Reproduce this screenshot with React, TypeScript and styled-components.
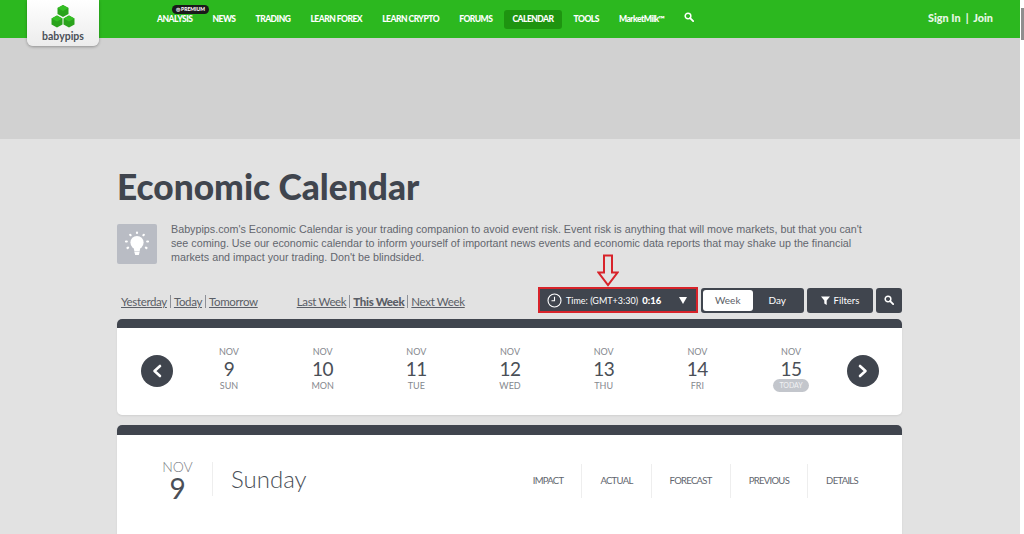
import React from "react";
import styled, { createGlobalStyle } from "styled-components";

const GlobalStyle = createGlobalStyle`
  html, body {
    margin: 0;
    padding: 0;
    background: #e2e2e2;
    overflow: hidden;
  }
  * {
    box-sizing: border-box;
  }
`;

const navItems = [
  "ANALYSIS",
  "NEWS",
  "TRADING",
  "LEARN FOREX",
  "LEARN CRYPTO",
  "FORUMS",
  "CALENDAR",
  "TOOLS",
  "MarketMilk™",
];

const days = [
  { date: "9", name: "SUN" },
  { date: "10", name: "MON" },
  { date: "11", name: "TUE" },
  { date: "12", name: "WED" },
  { date: "13", name: "THU" },
  { date: "14", name: "FRI" },
  { date: "15", name: "TODAY", today: true },
];

const columns = ["IMPACT", "ACTUAL", "FORECAST", "PREVIOUS", "DETAILS"];

const SearchIcon = ({ size = 10 }: { size?: number }) => (
  <svg width={size} height={size} viewBox="0 0 12 12" fill="none" stroke="currentColor" strokeWidth="1.8">
    <circle cx="4.8" cy="4.8" r="3.4" />
    <path d="M7.4 7.4 11 11" strokeLinecap="round" strokeWidth="2.2" />
  </svg>
);

const Logo = () => (
  <svg width="24" height="24" viewBox="0 0 24 24">
    <path d="M12 1 17.5 4v6L12 13 6.500 10V4z" fill="#2aa31c" />
    <path d="M6 11.500 11.500 14.500v6L6 23.500.5 20.500v-6z" fill="#2aa31c" />
    <path d="M18 11.500 23.500 14.500v6L18 23.500l-5.500-3v-6z" fill="#2aa31c" />
    <path d="M12 1 17.500 4 12 7 6.500 4z" fill="#35bf25" />
    <path d="M6 11.500 11.500 14.500 6 17.500.5 14.500z" fill="#35bf25" />
    <path d="M18 11.500 23.500 14.500 18 17.500l-5.500-3z" fill="#35bf25" />
  </svg>
);

const BulbIcon = () => (
  <svg width="26" height="26" viewBox="0 0 26 26" fill="#fff">
    <circle cx="13" cy="11.500" r="6.600" />
    <path d="M9.500 16h7l-.8 4h-5.400z" />
    <path d="M10.200 20.500h5.600l-1 3.500h-3.600z" />
    <g stroke="#fff" strokeWidth="2.200" strokeLinecap="round">
      <path d="M13 1.500v.4M6.200 3.800l.4.4M19.800 3.800l-.4.4M2 10.500h.8M23.200 10.500h.8M3.500 17l.6-.4M22.500 17l-.6-.4" />
    </g>
  </svg>
);

const ClockIcon = () => (
  <svg width="15" height="15" viewBox="0 0 15 15" fill="none" stroke="#fff" strokeWidth="1.100">
    <circle cx="7.500" cy="7.500" r="6.500" />
    <path d="M7.500 3.800v3.900H4.500" />
  </svg>
);

const FunnelIcon = () => (
  <svg width="9" height="9" viewBox="0 0 9 9" fill="#fff">
    <path d="M0 .5h9L5.700 4.500V9L3.300 7.500v-3z" />
  </svg>
);

const Chevron = ({ right }: { right?: boolean }) => (
  <svg width="10" height="14" viewBox="0 0 10 14" fill="none" stroke="#fff" strokeWidth="2.600" strokeLinecap="round" strokeLinejoin="round">
    <path d={right ? "M2 2l5.500 5L2 12" : "M8 2 2.500 7 8 12"} />
  </svg>
);

const App = () => {
  return (
    <>
      <GlobalStyle />
      <Frame>
        <Page>
          <TopBar>
            <LogoCard>
              <Logo />
              <LogoText>babypips</LogoText>
            </LogoCard>
            <Nav>
              {navItems.map((item) => (
                <NavItem key={item} $active={item === "CALENDAR"}>
                  {item === "ANALYSIS" && <PremiumBadge>◎ PREMIUM</PremiumBadge>}
                  {item}
                </NavItem>
              ))}
              <NavSearch>
                <SearchIcon />
              </NavSearch>
            </Nav>
            <Account>Sign In &nbsp;|&nbsp; Join</Account>
          </TopBar>
          <AdBand />
          <Main>
            <Title>Economic Calendar</Title>
            <Intro>
              <BulbBox>
                <BulbIcon />
              </BulbBox>
              <IntroText>
                Babypips.com's Economic Calendar is your trading companion to avoid event risk. Event risk is anything
                that will move markets, but that you can't see coming. Use our economic calendar to inform yourself of
                important news events and economic data reports that may shake up the financial markets and impact your
                trading. Don't be blindsided.
              </IntroText>
            </Intro>
            <Toolbar>
              <LinkGroup>
                <DateLink>Yesterday</DateLink>
                <DateLink>Today</DateLink>
                <DateLink>Tomorrow</DateLink>
              </LinkGroup>
              <WeekLinks>
                <DateLink>Last Week</DateLink>
                <DateLink $bold>This Week</DateLink>
                <DateLink>Next Week</DateLink>
              </WeekLinks>
              <Controls>
                <TimeWrap>
                  <TimeButton>
                    <ClockIcon />
                    <TimeLabel>Time: (GMT+3:30)</TimeLabel>
                    <TimeValue>0:16</TimeValue>
                    <Caret />
                  </TimeButton>
                  <ArrowMark>
                    <svg width="22" height="33" viewBox="0 0 22 33" fill="none" stroke="#d8232a" strokeWidth="2">
                      <path d="M7 1.500h8v17h5.500L11 31 1.500 18.500H7z" />
                    </svg>
                  </ArrowMark>
                </TimeWrap>
                <ViewSwitch>
                  <ViewOption $selected>Week</ViewOption>
                  <ViewOption>Day</ViewOption>
                </ViewSwitch>
                <DarkButton $width={66}>
                  <FunnelIcon />
                  Filters
                </DarkButton>
                <DarkButton $width={26}>
                  <SearchIcon />
                </DarkButton>
              </Controls>
            </Toolbar>
            <Card>
              <CardTop $height={9} />
              <WeekRow>
                <RoundButton>
                  <Chevron />
                </RoundButton>
                <Days>
                  {days.map((day) => (
                    <Day key={day.date}>
                      <DayMonth>NOV</DayMonth>
                      <DayNumber>{day.date}</DayNumber>
                      {day.today ? <TodayPill>{day.name}</TodayPill> : <DayName>{day.name}</DayName>}
                    </Day>
                  ))}
                </Days>
                <RoundButton>
                  <Chevron right />
                </RoundButton>
              </WeekRow>
            </Card>
            <DayCard>
              <CardTop $height={10} />
              <DayHeader>
                <DateBlock>
                  <DateMonth>NOV</DateMonth>
                  <DateNumber>9</DateNumber>
                </DateBlock>
                <DayTitle>Sunday</DayTitle>
                <Columns>
                  {columns.map((column) => (
                    <Column key={column}>{column}</Column>
                  ))}
                </Columns>
              </DayHeader>
            </DayCard>
          </Main>
        </Page>
        <ScrollTrack>
          <ScrollThumb />
        </ScrollTrack>
      </Frame>
    </>
  );
};

const Frame = styled.div`
  width: 1024px;
  height: 534px;
  overflow: hidden;
  display: flex;
`;

const Page = styled.div`
  width: 1020px;
  height: 534px;
  overflow: hidden;
  background: #e2e2e2;
  font-family: "Lato", "Liberation Sans", sans-serif;
  color: #40454e;
`;

const ScrollTrack = styled.div`
  width: 4px;
  background: #fff;
  padding: 8px 0 0 1px;
`;

const ScrollThumb = styled.div`
  height: 32px;
  background: #8e8e8e;
`;

const TopBar = styled.header`
  position: relative;
  height: 38px;
  background: #2cb81f;
  display: flex;
  align-items: center;
  padding: 0 27px 0 27px;
`;

const LogoCard = styled.div`
  width: 72px;
  height: 46px;
  align-self: flex-start;
  background: linear-gradient(#ffffff, #ececec);
  border-radius: 0 0 6px 6px;
  box-shadow: 0 1px 3px rgba(0, 0, 0, 0.3);
  display: flex;
  flex-direction: column;
  align-items: center;
  padding-top: 4px;
  position: relative;
  z-index: 1;
`;

const LogoText = styled.div`
  font-size: 10.500px;
  font-weight: 700;
  line-height: 13px;
  margin-top: 2px;
  color: #4a4f57;
`;

const Nav = styled.nav`
  display: flex;
  align-items: center;
  margin-left: 58px;
  gap: 20px;
`;

const NavItem = styled.div<{ $active?: boolean }>`
  position: relative;
  font-size: 8.5px;
  font-weight: 900;
  letter-spacing: -0.5px;
  color: #fff;
  white-space: nowrap;
  height: 19px;
  line-height: 19px;
  padding: 0 8px;
  margin: 0 -8px;
  border-radius: 3px;
  background: ${(p) => (p.$active ? "#1e9410" : "transparent")};
`;

const PremiumBadge = styled.span`
  position: absolute;
  left: 23px;
  top: -5px;
  width: 37px;
  height: 9px;
  line-height: 9px;
  text-align: center;
  border-radius: 5px;
  background: #1a1a1a;
  color: #fff;
  font-size: 5px;
  font-weight: 900;
  letter-spacing: 0;
`;

const NavSearch = styled.div`
  color: #fff;
  display: flex;
  margin-top: -4px;
  margin-left: -1px;
`;

const Account = styled.div`
  margin-left: auto;
  margin-bottom: 3px;
  font-size: 10.800px;
  font-weight: 900;
  color: #e8f7e6;
`;

const AdBand = styled.div`
  height: 101px;
  background: #d1d1d1;
`;

const Main = styled.main`
  width: 785px;
  margin-left: 117px;
`;

const Title = styled.h1`
  margin: 30px 0 0;
  font-size: 35.300px;
  line-height: 36px;
  font-weight: 900;
  color: #40454e;
`;

const Intro = styled.div`
  display: flex;
  gap: 14px;
  margin-top: 19px;
`;

const BulbBox = styled.div`
  width: 40px;
  height: 40px;
  flex: none;
  border-radius: 2px;
  background: #b9bcc4;
  display: flex;
  align-items: center;
  justify-content: center;
`;

const IntroText = styled.p`
  margin: -2px 0 0;
  width: 700px;
  font-family: "Liberation Sans", Arial, sans-serif;
  font-size: 10.740px;
  line-height: 14px;
  color: #62666e;
`;

const Toolbar = styled.div`
  display: flex;
  align-items: center;
  margin-top: 23px;
  height: 26px;
  padding-left: 4px;
`;

const LinkGroup = styled.div`
  display: flex;
  align-items: center;
  padding-top: 2px;
`;

const WeekLinks = styled(LinkGroup)`
  margin-left: 36px;
`;

const DateLink = styled.a<{ $bold?: boolean }>`
  font-size: 11.500px;
  letter-spacing: -0.35px;
  line-height: 13px;
  color: #5a5e66;
  font-weight: ${(p) => (p.$bold ? 900 : 400)};
  text-decoration: underline;
  padding: 0 3px;
  border-left: 1px solid #8d9097;

  &:first-child {
    border-left: 0;
    padding-left: 0;
  }
`;

const Controls = styled.div`
  margin-left: auto;
  display: flex;
  align-items: center;
  gap: 3px;
`;

const TimeWrap = styled.div`
  position: relative;
`;

const TimeButton = styled.div`
  width: 160px;
  height: 26px;
  background: #40454e;
  border: 2px solid #d8232a;
  color: #fff;
  display: flex;
  align-items: center;
  padding: 0 9px 0 7px;
  font-size: 9px;
`;

const TimeLabel = styled.span`
  margin-left: 4px;
`;

const TimeValue = styled.span`
  margin-left: 4px;
  font-weight: 900;
  font-size: 9.500px;
`;

const Caret = styled.span`
  margin-left: auto;
  width: 0;
  height: 0;
  border-left: 4.500px solid transparent;
  border-right: 4.500px solid transparent;
  border-top: 7px solid #fff;
`;

const ArrowMark = styled.div`
  position: absolute;
  left: 59px;
  top: -33px;
  line-height: 0;
`;

const ViewSwitch = styled.div`
  width: 103px;
  height: 25px;
  background: #40454e;
  border-radius: 3px;
  padding: 2px;
  display: flex;
`;

const ViewOption = styled.div<{ $selected?: boolean }>`
  width: 50px;
  text-align: center;
  line-height: 21px;
  font-size: 10px;
  border-radius: 3px;
  background: ${(p) => (p.$selected ? "#fff" : "transparent")};
  color: ${(p) => (p.$selected ? "#5a5e66" : "#fff")};
`;

const DarkButton = styled.div<{ $width: number }>`
  width: ${(p) => p.$width}px;
  height: 25px;
  background: #40454e;
  border-radius: 3px;
  color: #fff;
  font-size: 9.500px;
  display: flex;
  align-items: center;
  justify-content: center;
  gap: 4px;
`;

const Card = styled.section`
  background: #fff;
  border-radius: 5px;
  overflow: hidden;
  margin-top: 6px;
  box-shadow: 0 1px 2px rgba(0, 0, 0, 0.08);
`;

const DayCard = styled(Card)`
  margin-top: 10px;
  height: 200px;
`;

const CardTop = styled.div<{ $height: number }>`
  height: ${(p) => p.$height}px;
  background: #40454e;
`;

const WeekRow = styled.div`
  height: 87px;
  display: flex;
  align-items: center;
  padding: 0 23px 16px 24px;
`;

const RoundButton = styled.div`
  width: 32px;
  height: 32px;
  flex: none;
  border-radius: 50%;
  background: #40454e;
  display: flex;
  align-items: center;
  justify-content: center;
  margin-top: 14px;
`;

const Days = styled.div`
  flex: 1;
  display: grid;
  grid-template-columns: repeat(7, 93.700px);
  justify-content: center;
  padding-top: 13px;
  margin-top: -2px;
`;

const Day = styled.div`
  display: flex;
  flex-direction: column;
  align-items: center;
`;

const DayMonth = styled.div`
  font-size: 9px;
  line-height: 11px;
  color: #85888e;
`;

const DayNumber = styled.div`
  font-size: 19px;
  line-height: 23px;
  font-weight: 400;
  letter-spacing: -0.5px;
  color: #4a4f57;
`;

const DayName = styled.div`
  font-size: 9px;
  line-height: 11px;
  color: #85888e;
`;

const TodayPill = styled.div`
  width: 36px;
  height: 13px;
  margin-top: -1px;
  border-radius: 7px;
  background: #c3c6cc;
  color: #f1f2f4;
  font-size: 7px;
  line-height: 13px;
  text-align: center;
`;

const DayHeader = styled.div`
  display: flex;
  align-items: center;
  height: 90px;
  padding-left: 38px;
  margin-top: -1px;
`;

const DateBlock = styled.div`
  width: 58px;
  height: 34px;
  display: flex;
  flex-direction: column;
  align-items: center;
  padding-right: 12px;
  border-right: 1px solid #eeeeee;
`;

const DateMonth = styled.div`
  font-size: 14px;
  line-height: 13px;
  font-weight: 300;
  margin-top: -2px;
  color: #7b7e85;
`;

const DateNumber = styled.div`
  font-size: 28px;
  line-height: 22px;
  margin-top: 4px;
  color: #4a4f57;
`;

const DayTitle = styled.div`
  margin-left: 18px;
  margin-bottom: 2px;
  font-size: 24px;
  font-weight: 300;
  color: #4a4f57;
`;

const Columns = styled.div`
  margin-left: auto;
  margin-top: 4px;
  display: flex;
  height: 34px;
  padding-right: 26px;
`;

const Column = styled.div`
  padding: 0 18px;
  line-height: 34px;
  font-size: 9.500px;
  letter-spacing: -0.7px;
  color: #62666e;
  border-left: 1px solid #eeeeee;

  &:first-child {
    border-left: 0;
  }
`;

export default App;
